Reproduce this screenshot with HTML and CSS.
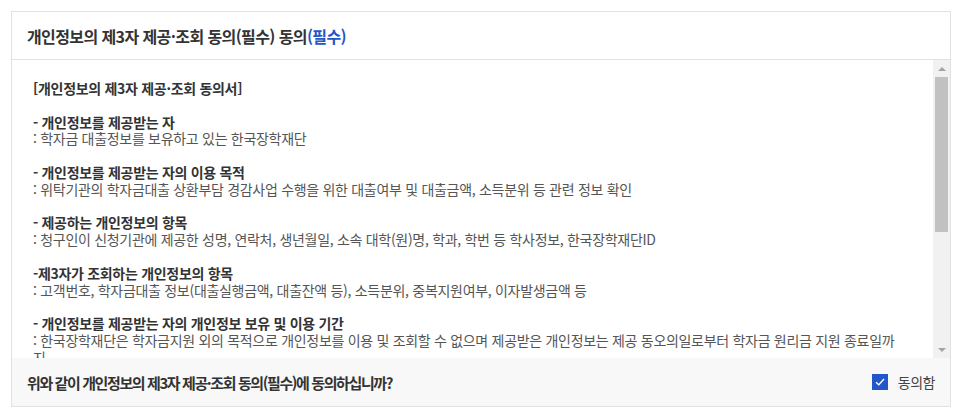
FILE: index.html
```html
<!DOCTYPE html>
<html lang="ko">

<head>
	<meta charset="UTF-8">
	<meta name="viewport" content="width=device-width, initial-scale=1.0">
	<title>제3자 제공·조회 동의</title>
	<link rel="stylesheet" href="styles.css">
</head>

<body>
	<div class="agree-box">
		<div class="agree-head">
			<h3>개인정보의 제3자 제공·조회 동의(필수) 동의<span class="req">(필수)</span></h3>
		</div>
		<div class="agree-scroll">
			<div class="agree-body">
				<p><strong>[개인정보의 제3자 제공·조회 동의서]</strong></p>
				<p>
					<strong>- 개인정보를 제공받는 자</strong><br>
					: 학자금 대출정보를 보유하고 있는 한국장학재단
				</p>
				<p>
					<strong>- 개인정보를 제공받는 자의 이용 목적</strong><br>
					: 위탁기관의 학자금대출 상환부담 경감사업 수행을 위한 대출여부 및 대출금액, 소득분위 등 관련 정보 확인
				</p>
				<p>
					<strong>- 제공하는 개인정보의 항목</strong><br>
					: 청구인이 신청기관에 제공한 성명, 연락처, 생년월일, 소속 대학(원)명, 학과, 학번 등 학사정보, 한국장학재단ID
				</p>
				<p>
					<strong>-제3자가 조회하는 개인정보의 항목</strong><br>
					: 고객번호, 학자금대출 정보(대출실행금액, 대출잔액 등), 소득분위, 중복지원여부, 이자발생금액 등
				</p>
				<p>
					<strong>- 개인정보를 제공받는 자의 개인정보 보유 및 이용 기간</strong><br>
					: 한국장학재단은 학자금지원 외의 목적으로 개인정보를 이용 및 조회할 수 없으며 제공받은 개인정보는 제공 동오의일로부터 학자금 원리금 지원 종료일까지
				</p>
				<p>
					<strong>- 동의를 거부할 권리 및 동의를 거부할 경우의 불이익</strong><br>
					: 위 개인정보 제공·조회에 대한 동의를 거부할 권리가 있으며, 동의를 거부할 경우 지원이 제한될 수 있습니다.
				</p>
			</div>
			<div class="scrollbar">
				<span class="arrow up"></span>
				<div class="track">
					<div class="thumb"></div>
				</div>
				<span class="arrow down"></span>
			</div>
		</div>
		<div class="agree-foot">
			<p class="question">위와 같이 개인정보의 제3자 제공·조회 동의(필수)에 동의하십니까?</p>
			<label class="check">
				<span class="check-box">
					<svg width="10" height="8" viewBox="0 0 10 8"><path d="M1 4.2 L3.8 6.8 L9 1" fill="none" stroke="#fff" stroke-width="1.3"/></svg>
				</span>
				동의함
			</label>
		</div>
	</div>
</body>

</html>
```

FILE: styles.css
```css
* {
	box-sizing: border-box;
}

body {
	margin: 0;
	padding: 11px 13px 11px 11px;
	font-family: "Noto Sans CJK KR", "Noto Sans", sans-serif;
	background-color: #fff;
	color: #333;
}

.agree-box {
	width: 940px;
	border: 1px solid #e2e2e2;
}

.agree-head {
	height: 48px;
	display: flex;
	align-items: center;
	padding: 0 15px;
	border-bottom: 1px solid #e2e2e2;
}

.agree-head h3 {
	margin: 0;
	font-size: 16px;
	font-weight: 700;
	letter-spacing: -0.6px;
	color: #333;
}

.agree-head .req {
	color: #2357c9;
}

.agree-scroll {
	height: 298px;
	display: flex;
}

.agree-body {
	flex: 1;
	overflow: hidden;
	padding: 20px 30px 0 21px;
	font-size: 14px;
	line-height: 16.8px;
	letter-spacing: -0.3px;
	color: #555;
}

.agree-body p {
	margin: 0 0 16.8px;
}

.agree-body strong {
	font-weight: 700;
	color: #333;
}

/* fake scrollbar */
.scrollbar {
	width: 17px;
	display: flex;
	flex-direction: column;
	background-color: #f1f1f1;
}

.arrow {
	height: 17px;
	display: flex;
	align-items: center;
	justify-content: center;
}

.arrow::before {
	content: "";
	border-left: 4px solid transparent;
	border-right: 4px solid transparent;
}

.arrow.up::before {
	border-bottom: 4px solid #a3a3a3;
}

.arrow.down::before {
	border-top: 4px solid #a3a3a3;
}

.track {
	flex: 1;
	padding: 0 2px;
}

.thumb {
	height: 155px;
	background-color: #c1c1c1;
}

.agree-foot {
	height: 48px;
	display: flex;
	align-items: center;
	justify-content: space-between;
	padding: 0 15px;
	background-color: #f8f8f8;
}

.question {
	margin: 0;
	font-size: 15px;
	font-weight: 700;
	letter-spacing: -1.4px;
	color: #333;
}

.check {
	display: flex;
	align-items: center;
	gap: 10px;
	font-size: 14px;
	letter-spacing: -0.5px;
	color: #444;
}

.check-box {
	width: 16px;
	height: 16px;
	display: flex;
	align-items: center;
	justify-content: center;
	background-color: #2357c9;
}
```
